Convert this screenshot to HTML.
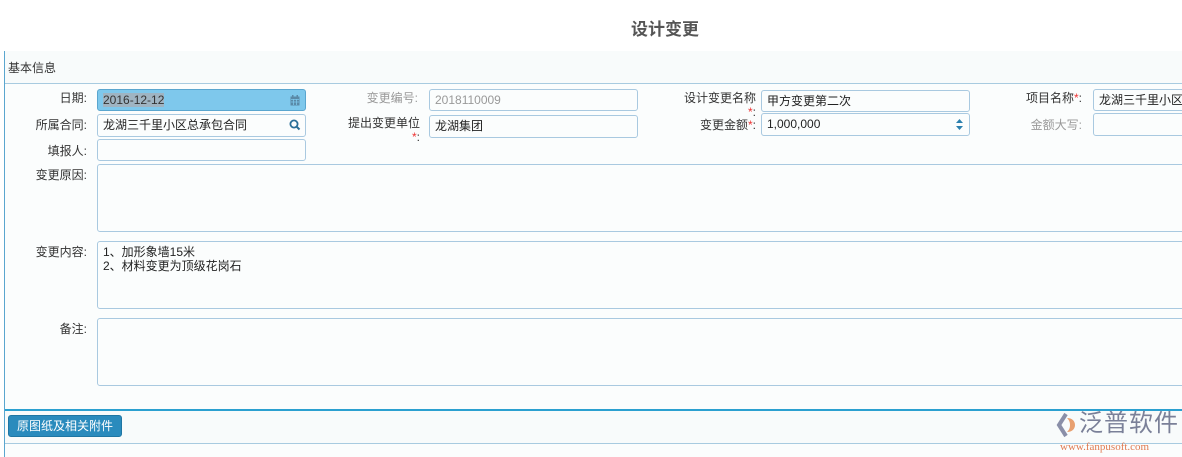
<!DOCTYPE html>
<html><head><meta charset="utf-8"><style>
*{box-sizing:border-box;margin:0;padding:0}
body{width:1182px;height:457px;overflow:hidden;background:#fff;font-family:"Liberation Sans","Noto Sans CJK SC",sans-serif;font-size:12px;color:#333;position:relative}
.a{position:absolute}
.t{left:0;width:1330px;text-align:center;top:15px;font-size:17px;font-weight:bold;color:#555}
.panel{left:4px;top:51px;width:1200px;height:406px;border-left:1px solid #5aa6cf;background:#fbfdfd}
.hd{left:5px;top:51px;width:1200px;height:33px;border-bottom:1px solid #a8cbe0;background:#f8fbfb;padding:8px 0 0 3px}
.l{text-align:right;width:120px;line-height:14px}
.i{height:22px;border:1px solid #a9c9e0;border-radius:3px;background:#fbfdfd;padding:3px 5px;line-height:14px;color:#222}
.g{color:#999}
.r{color:#e33}
</style></head><body>
<div class="a t">设计变更</div>
<div class="a panel"></div>
<div class="a hd">基本信息</div>

<div class="a l" style="left:-33px;top:91px">日期:</div>
<div class="a i" style="left:97px;top:89px;width:209px;background:#7ec8ec;border-color:#5aa6cf"><span style="background:#9fb4c2;color:#333">2016-12-12</span>
<svg class="a" style="right:5px;top:5px" width="10" height="11" viewBox="0 0 10 11"><rect x="0.5" y="1.5" width="9" height="9" fill="#5a8aa8"/><rect x="2" y="0" width="1.5" height="3" fill="#5a8aa8"/><rect x="6.5" y="0" width="1.5" height="3" fill="#5a8aa8"/><path d="M1 4.5h8M1 7h8M3.5 4v6M6.5 4v6" stroke="#7ec8ec" stroke-width=".8"/></svg></div>
<div class="a l g" style="left:298px;top:91px">变更编号:</div>
<div class="a i g" style="left:429px;top:89px;width:209px">2018110009</div>
<div class="a l" style="left:636px;top:91px">设计变更名称<br><span class="r">*</span>:</div>
<div class="a i" style="left:761px;top:90px;width:209px">甲方变更第二次</div>
<div class="a l" style="left:962px;top:91px">项目名称<span class="r">*</span>:</div>
<div class="a i" style="left:1093px;top:89px;width:100px;white-space:nowrap;overflow:hidden">龙湖三千里小区</div>

<div class="a l" style="left:-33px;top:118px">所属合同:</div>
<div class="a i" style="left:97px;top:114px;width:209px;height:23px">龙湖三千里小区总承包合同
<svg class="a" style="right:4px;top:4px" width="12" height="12" viewBox="0 0 12 12"><circle cx="5" cy="5" r="3.6" fill="none" stroke="#2a6f98" stroke-width="1.8"/><path d="M7.5 7.5l3 3" stroke="#2a6f98" stroke-width="2"/></svg></div>
<div class="a l" style="left:300px;top:116px">提出变更单位<br><span class="r">*</span>:</div>
<div class="a i" style="left:429px;top:115px;width:209px;height:23px">龙湖集团</div>
<div class="a l" style="left:636px;top:118px">变更金额<span class="r">*</span>:</div>
<div class="a i" style="left:761px;top:113px;width:209px;height:23px">1,000,000
<svg class="a" style="right:6px;top:4px" width="7" height="13" viewBox="0 0 7 13"><path d="M0 5l3.5-4 3.5 4zM0 8l3.5 4 3.5-4z" fill="#2a7fae"/></svg></div>
<div class="a l g" style="left:962px;top:118px">金额大写:</div>
<div class="a i" style="left:1093px;top:113px;width:100px;height:23px"></div>

<div class="a l" style="left:-33px;top:144px">填报人:</div>
<div class="a i" style="left:97px;top:139px;width:209px"></div>

<div class="a l" style="left:-33px;top:168px">变更原因:</div>
<div class="a i" style="left:97px;top:164px;width:1100px;height:68px"></div>
<div class="a l" style="left:-33px;top:245px">变更内容:</div>
<div class="a i" style="left:97px;top:241px;width:1100px;height:68px;padding-top:3px">1、加形象墙15米<br>2、材料变更为顶级花岗石</div>
<div class="a l" style="left:-33px;top:322px">备注:</div>
<div class="a i" style="left:97px;top:318px;width:1100px;height:68px"></div>

<div class="a" style="left:5px;top:409px;width:1200px;height:35px;border-top:2px solid #2ba0d0;border-bottom:1px solid #a8cbe0;background:#f8fbfb"></div>
<div class="a" style="left:8px;top:415px;width:114px;height:22px;background:#2a8bbd;border:1px solid #1f76a3;border-radius:3px;color:#fff;text-align:center;line-height:20px">原图纸及相关附件</div>
<div class="a" style="left:1056px;top:412px;width:22px;height:26px"><svg width="22" height="26" viewBox="0 0 22 26"><path d="M10 2L3 13l7 11" fill="none" stroke="#8a8fa8" stroke-width="4"/><path d="M11 6c5 0 8 3 8 7s-3 7-8 7c2-2 3-4 3-7s-1-5-3-7z" fill="#e8a070"/></svg></div>
<div class="a" style="left:1079px;top:410px;font-size:24px;line-height:28px;color:#7a8098;letter-spacing:1px">泛普软件</div>
<div class="a" style="left:1060px;top:441px;font-size:11px;color:#e07a50;font-family:'Liberation Serif',serif">www.fanpusoft.com</div>
</body></html>
